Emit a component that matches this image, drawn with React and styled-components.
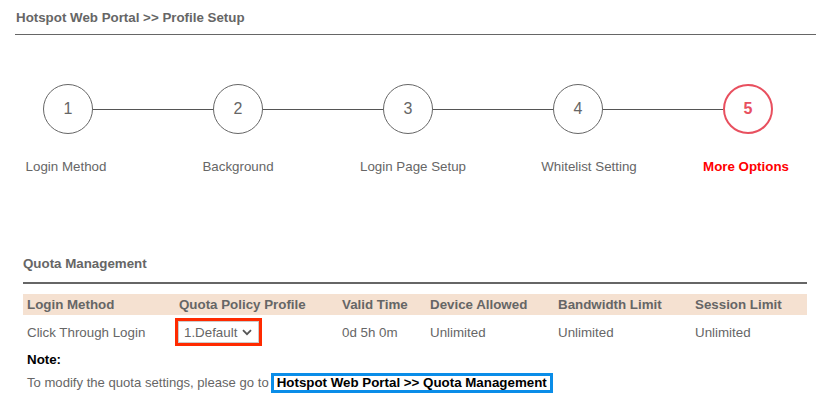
import React from "react";
import styled, { createGlobalStyle } from "styled-components";

const GlobalStyle = createGlobalStyle`
  body {
    margin: 0;
    background: #fff;
    font-family: "Liberation Sans", Arial, sans-serif;
    color: #666;
  }
`;

const steps = [
  { n: 1, label: "Login Method", shift: -2 },
  { n: 2, label: "Background", shift: 0 },
  { n: 3, label: "Login Page Setup", shift: 5 },
  { n: 4, label: "Whitelist Setting", shift: 11 },
  { n: 5, label: "More Options", shift: -2, active: true },
];

const columns = [
  { title: "Login Method", width: 152 },
  { title: "Quota Policy Profile", width: 163 },
  { title: "Valid Time", width: 88 },
  { title: "Device Allowed", width: 128 },
  { title: "Bandwidth Limit", width: 137 },
  { title: "Session Limit", width: 116 },
];

const App = () => {
  return (
    <Page>
      <GlobalStyle />
      <Title>Hotspot Web Portal &gt;&gt; Profile Setup</Title>
      <Stepper>
        {steps.map((s, i) => (
          <React.Fragment key={s.n}>
            {i > 0 && <Connector />}
            <Step>
              <Circle $active={s.active}>{s.n}</Circle>
              <StepLabel $active={s.active} $shift={s.shift}>
                {s.label}
              </StepLabel>
            </Step>
          </React.Fragment>
        ))}
      </Stepper>

      <Section>
        <SectionTitle>Quota Management</SectionTitle>
        <Table>
          <colgroup>
            {columns.map((c) => (
              <col key={c.title} style={{ width: c.width }} />
            ))}
          </colgroup>
          <thead>
            <tr>
              {columns.map((c) => (
                <Th key={c.title}>{c.title}</Th>
              ))}
            </tr>
          </thead>
          <tbody>
            <tr>
              <Td>Click Through Login</Td>
              <Td>
                <Highlight>
                  <Select>
                    1.Default
                    <svg width="10" height="7" viewBox="0 0 10 7">
                      <path d="M1 1.2 L5 5.2 L9 1.2" fill="none" stroke="#555" strokeWidth="1.8" />
                    </svg>
                  </Select>
                </Highlight>
              </Td>
              <Td>0d 5h 0m</Td>
              <Td>Unlimited</Td>
              <Td>Unlimited</Td>
              <Td>Unlimited</Td>
            </tr>
          </tbody>
        </Table>
        <Note>Note:</Note>
        <NoteText>
          To modify the quota settings, please go to
          <LinkBox>Hotspot Web Portal &gt;&gt; Quota Management</LinkBox>
        </NoteText>
      </Section>
    </Page>
  );
};

export default App;

const Page = styled.div`
  width: 827px;
  height: 404px;
  overflow: hidden;
  padding: 10px 0 0 15px;
  box-sizing: border-box;
  font-size: 13.33px;
`;

const Title = styled.div`
  width: 800px;
  font-size: 13.33px;
  font-weight: bold;
  color: #666;
  padding: 0 0 9px 1px;
  line-height: 15px;
  border-bottom: 1px solid #666;
`;

const Stepper = styled.div`
  display: flex;
  align-items: flex-start;
  padding: 49px 0 0 28px;
`;

const Step = styled.div`
  width: 50px;
  display: flex;
  flex-direction: column;
  align-items: center;
`;

const Circle = styled.div`
  width: 50px;
  height: 50px;
  box-sizing: border-box;
  border-radius: 50%;
  border: ${(p) => (p.$active ? "2px solid #e8505f" : "1px solid #666")};
  color: ${(p) => (p.$active ? "#e8505f" : "#666")};
  font-weight: ${(p) => (p.$active ? "bold" : "normal")};
  font-size: 16px;
  display: flex;
  align-items: center;
  justify-content: center;
`;

const StepLabel = styled.div`
  margin-top: 25px;
  white-space: nowrap;
  font-size: 13.33px;
  line-height: 15px;
  transform: translateX(${(p) => p.$shift}px);
  color: ${(p) => (p.$active ? "#ff0000" : "#666")};
  font-weight: ${(p) => (p.$active ? "bold" : "normal")};
`;

const Connector = styled.div`
  width: 120px;
  height: 1px;
  margin-top: 25px;
  background: #555;
`;

const Section = styled.div`
  margin: 82px 0 0 8px;
  width: 784px;
`;

const SectionTitle = styled.div`
  font-size: 13.33px;
  font-weight: bold;
  color: #666;
  line-height: 15px;
  padding-bottom: 11px;
  border-bottom: 2px solid #666;
`;

const Table = styled.table`
  margin-top: 10px;
  width: 784px;
  border-collapse: collapse;
  table-layout: fixed;
  font-size: 13.33px;
`;

const Th = styled.th`
  background: #f5e1d1;
  text-align: left;
  font-weight: bold;
  color: #666;
  padding: 0 0 0 4px;
  height: 21px;
  white-space: nowrap;
`;

const Td = styled.td`
  color: #666;
  padding: 0 0 0 4px;
  height: 34px;
  white-space: nowrap;
`;

const Highlight = styled.div`
  display: inline-block;
  margin-left: -4px;
  border: 3px solid #ff2a00;
  padding: 0;
`;

const Select = styled.div`
  display: flex;
  align-items: center;
  gap: 5px;
  height: 20px;
  padding: 0 6px 0 5px;
  border: 1px solid #ccc;
  color: #666;
  font-size: 13.33px;
  svg {
    margin-top: 1px;
  }
`;

const Note = styled.div`
  margin: 3px 0 0 4px;
  font-size: 13.33px;
  font-weight: bold;
  color: #000;
  line-height: 15px;
`;

const NoteText = styled.div`
  margin: 6px 0 0 4px;
  font-size: 13.1px;
  line-height: 20px;
  color: #666;
  display: flex;
  align-items: center;
  white-space: nowrap;
`;

const LinkBox = styled.span`
  margin-left: 2px;
  border: 3px solid #0a8de8;
  background: #fff;
  color: #000;
  font-weight: bold;
  font-size: 13.33px;
  padding: 0 3px;
  line-height: 14px;
`;
